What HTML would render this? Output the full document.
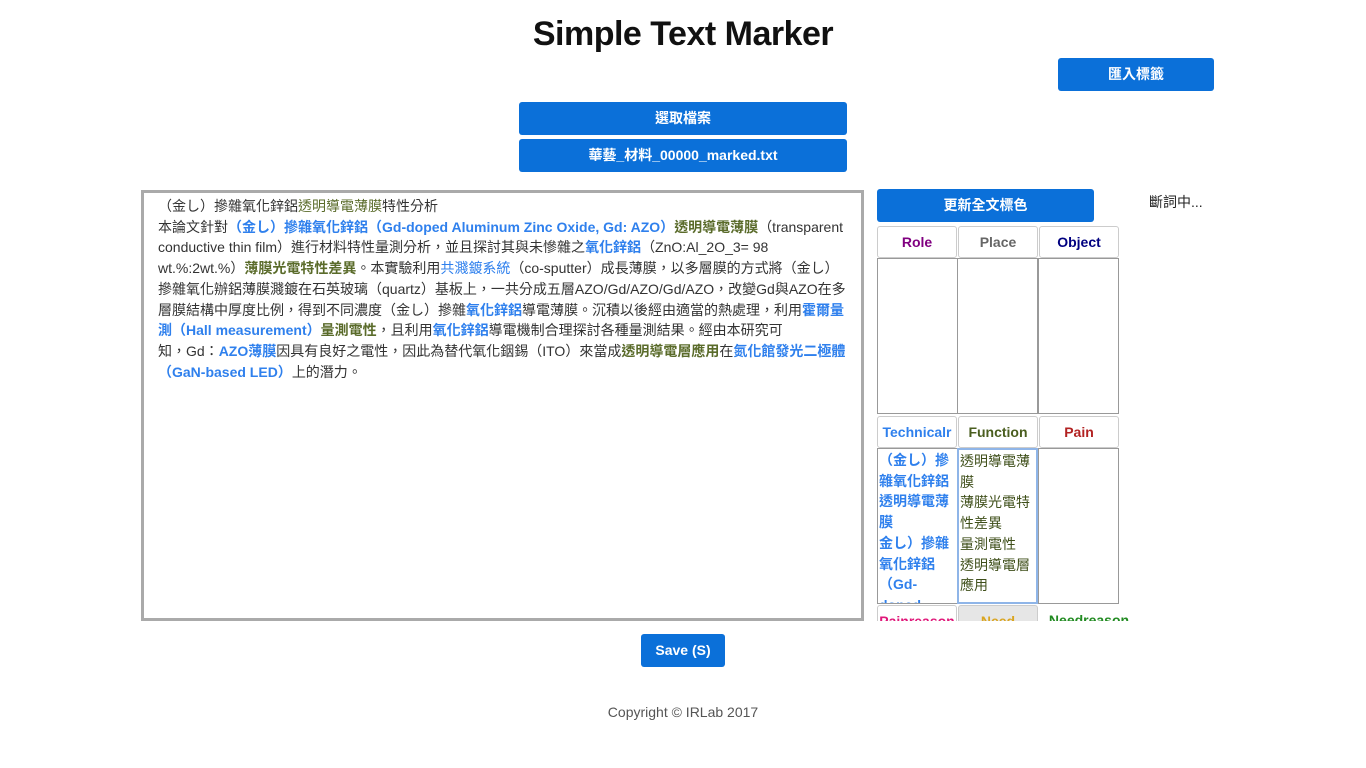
<!DOCTYPE html>
<html><head><meta charset="utf-8">
<style>
*{box-sizing:border-box;margin:0;padding:0}
body{width:1366px;height:768px;background:#fff;font-family:"Liberation Sans","Noto Sans CJK TC",sans-serif;color:#333;position:relative;overflow:hidden}
.abs{position:absolute}
.btn{position:absolute;background:#0b70d9;color:#fff;font-weight:bold;font-size:14px;text-align:center;border-radius:3px}
h1{position:absolute;left:0;width:1366px;top:15px;text-align:center;font-size:34px;font-weight:bold;color:#111;letter-spacing:-0.5px}
.ta{position:absolute;left:141px;top:190px;width:723px;height:431px;border:3px solid #aaa;padding:3px 14px;font-size:14px;line-height:20.7px;color:#333;white-space:nowrap;overflow:hidden}
.b{color:#2f80ed;font-weight:bold}
.g{color:#5a6b2a;font-weight:bold}
.hd{position:absolute;height:32px;width:80px;border:1px solid #ccc;border-radius:3px;text-align:center;font-size:14px;font-weight:bold;line-height:30px;background:#fff;overflow:hidden;white-space:nowrap}
.bx{position:absolute;width:81px;height:156px;border:1px solid #999;font-size:14px;line-height:20.7px;font-weight:bold;overflow:hidden;padding:1px 1px}
</style></head><body>
<h1>Simple Text Marker</h1>
<div class="btn" style="left:1058px;top:58px;width:156px;height:33px;line-height:33px">匯入標籤</div>
<div class="btn" style="left:519px;top:102px;width:328px;height:33px;line-height:33px">選取檔案</div>
<div class="btn" style="left:519px;top:139px;width:328px;height:33px;line-height:33px">華藝_材料_00000_marked.txt</div>
<div class="ta">（金し）摻雜氧化鋅鋁<span class="g" style="font-weight:normal">透明導電薄膜</span>特性分析<br>本論文針對<span class="b">（金し）摻雜氧化鋅鋁（Gd-doped Aluminum Zinc Oxide, Gd: AZO）</span><span class="g">透明導電薄膜</span>（transparent<br>conductive thin film）進行材料特性量測分析，並且探討其與未慘雜之<span class="b">氧化鋅鋁</span>（ZnO:Al_2O_3= 98<br>wt.%:2wt.%）<span class="g">薄膜光電特性差異</span>。本實驗利用<span class="b" style="font-weight:normal">共濺鍍系統</span>（co-sputter）成長薄膜，以多層膜的方式將（金し）<br>摻雜氧化辦鋁薄膜濺鍍在石英玻璃（quartz）基板上，一共分成五層AZO/Gd/AZO/Gd/AZO，改變Gd與AZO在多<br>層膜結構中厚度比例，得到不同濃度（金し）摻雜<span class="b">氧化鋅鋁</span>導電薄膜。沉積以後經由適當的熱處理，利用<span class="b">霍爾量</span><br><span class="b">測（Hall measurement）</span><span class="g">量測電性</span>，且利用<span class="b">氧化鋅鋁</span>導電機制合理探討各種量測結果。經由本研究可<br>知，Gd：<span class="b">AZO薄膜</span>因具有良好之電性，因此為替代氧化銦錫（ITO）來當成<span class="g">透明導電層應用</span>在<span class="b">氮化館發光二極體</span><br><span class="b">（GaN-based LED）</span>上的潛力。</div>
<div class="btn" style="left:877px;top:189px;width:217px;height:33px;line-height:33px">更新全文標色</div>
<div class="abs" style="left:1149px;top:192px;font-size:14px;color:#222">斷詞中...</div>
<div class="hd" style="left:877px;top:226px;color:#800080">Role</div>
<div class="hd" style="left:958px;top:226px;color:#666">Place</div>
<div class="hd" style="left:1039px;top:226px;color:#000080">Object</div>
<div class="bx" style="left:877px;top:258px"></div>
<div class="bx" style="left:957px;top:258px"></div>
<div class="bx" style="left:1038px;top:258px"></div>
<div class="hd" style="left:877px;top:416px;color:#2f80ed">Technicalr</div>
<div class="hd" style="left:958px;top:416px;color:#4a5e1f">Function</div>
<div class="hd" style="left:1039px;top:416px;color:#b22222">Pain</div>
<div class="bx" style="left:877px;top:448px;color:#2f80ed">（金し）摻雜氧化鋅鋁<br>透明導電薄膜<br>金し）摻雜氧化鋅鋁<br>（Gd-doped</div>
<div class="bx" style="left:957px;top:448px;color:#3f4f1a;font-weight:normal;border:2px solid #8fb5e8">透明導電薄膜<br>薄膜光電特性差異<br>量測電性<br>透明導電層應用</div>
<div class="bx" style="left:1038px;top:448px"></div>
<div class="abs" style="left:870px;top:605px;width:270px;height:16px;overflow:hidden">
<div class="hd" style="left:7px;top:0;color:#e0187a">Painreason</div>
<div class="hd" style="left:88px;top:0;color:#daa520;background:#e6e6e6">Need</div>
<div class="hd" style="left:169px;top:0;width:100px;color:#228b22;border:none">Needreason</div>
</div>
<div class="btn" style="left:641px;top:634px;width:84px;height:33px;line-height:33px">Save (S)</div>
<div class="abs" style="left:0;width:1366px;top:704px;text-align:center;font-size:14px;color:#555">Copyright © IRLab 2017</div>
</body></html>
